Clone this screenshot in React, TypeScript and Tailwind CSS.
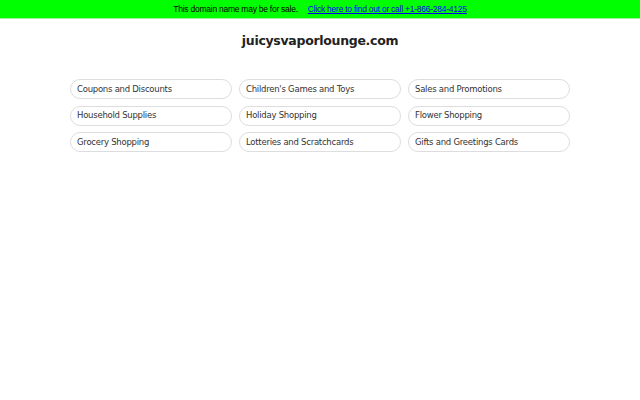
import React from "react";

const items = [
  "Coupons and Discounts",
  "Children's Games and Toys",
  "Sales and Promotions",
  "Household Supplies",
  "Holiday Shopping",
  "Flower Shopping",
  "Grocery Shopping",
  "Lotteries and Scratchcards",
  "Gifts and Greetings Cards",
];

export default function App() {
  return (
    <div className="w-[640px] h-[400px] bg-white">
      <div className="h-[19px] bg-[#00ff00] border-b border-[#a0f0a0] flex items-center justify-center text-[8.5px] tracking-[-0.25px] text-black pt-px" style={{ fontFamily: '"Liberation Sans", Arial, sans-serif' }}>
        <span>This domain name may be for sale.</span>
        <a href="#" className="ml-[10px] text-[#0000ee] underline">Click here to find out or call +1-866-284-4125</a>
      </div>
      <div style={{ fontFamily: '"DejaVu Sans", sans-serif' }}>
        <h1 className="text-center font-bold text-[12.5px] tracking-[-0.3px] text-[#222] mt-[14px] leading-[16px]">juicysvaporlounge.com</h1>
        <div className="w-[500px] mx-auto mt-[30px] grid grid-cols-3 gap-x-[7px] gap-y-[6.5px]">
          {items.map((t) => (
            <div key={t} className="h-[20px] rounded-full border border-[#dddddd] flex items-center px-[6px] text-[8.5px] tracking-[-0.25px] text-[#333]">
              {t}
            </div>
          ))}
        </div>
      </div>
    </div>
  );
}
